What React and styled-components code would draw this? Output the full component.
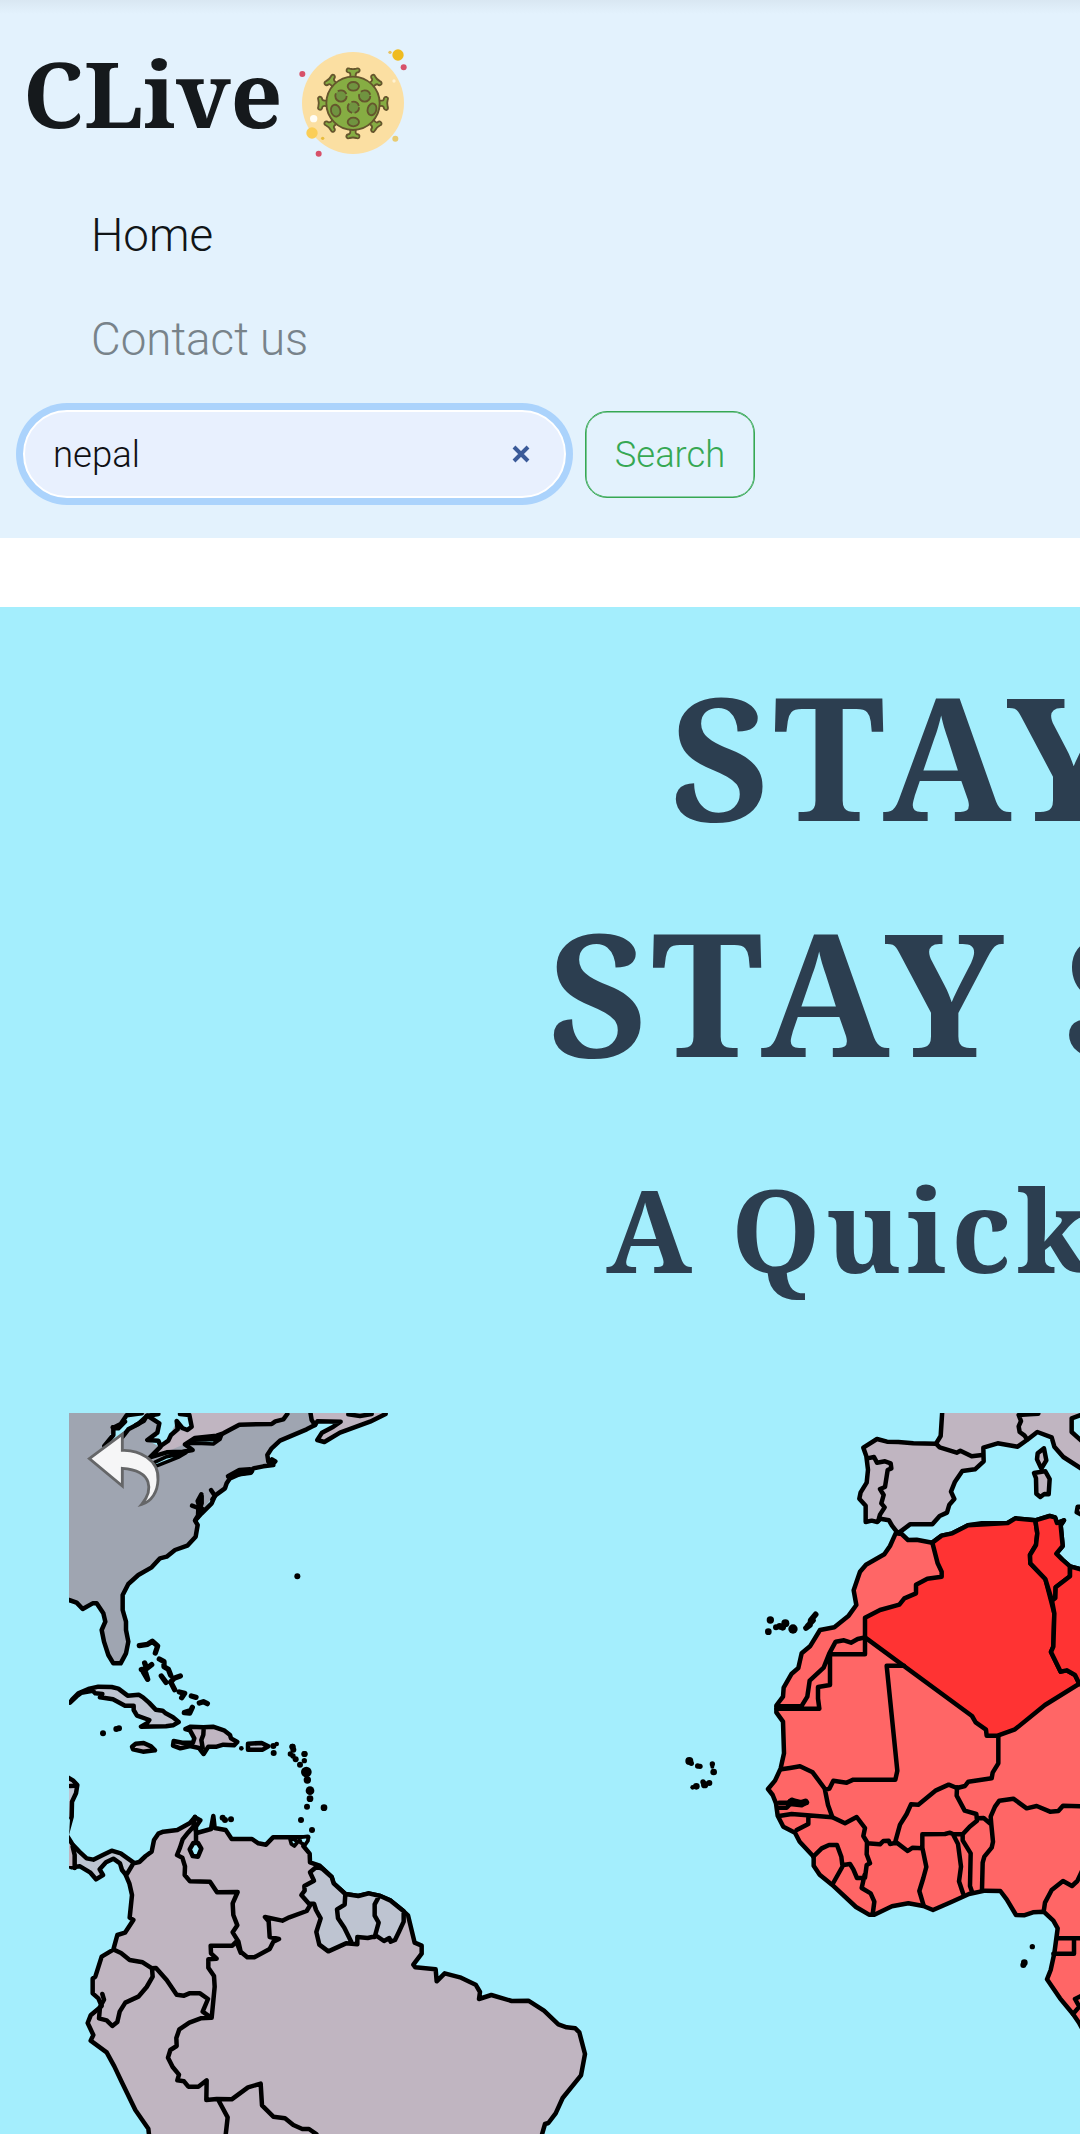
import React from "react";
import styled, { createGlobalStyle } from "styled-components";

const GlobalStyle = createGlobalStyle`
  *, *::before, *::after { box-sizing: border-box; }
  html, body { margin: 0; padding: 0; background: #fff; }
  body { overflow: hidden; font-family: Roboto, "Liberation Sans", sans-serif; font-weight: 300; }
`;

const serif = `"Noto Serif", "DejaVu Serif Condensed", "DejaVu Serif", serif`;

const Page = styled.div`
  width: 1080px;
  height: 2134px;
  overflow: hidden;
  display: flex;
  flex-direction: column;
`;

const Navbar = styled.header`
  height: 538px;
  flex: none;
  padding: 34px 17px 0;
  background: linear-gradient(#d9e7f2 0, #e3f2fd 14px);
`;

const Brand = styled.a`
  display: flex;
  height: 136px;
  padding-left: 6px;
  color: #15191c;
`;

const BrandName = styled.span`
  width: 269px;
  font: 700 91px/118px ${serif};
  white-space: nowrap;
`;

const Logo = styled.svg`
  width: 120px;
  height: 136px;
  flex: none;
`;

const NavList = styled.nav`
  display: flex;
  flex-direction: column;
  padding: 14px 0 0 74px;
`;

const NavLink = styled.a`
  height: 104px;
  line-height: 104px;
  font-size: 45.7px;
  color: ${(p) => (p.$active ? "#111517" : "#78838a")};
`;

const SearchForm = styled.div`
  display: flex;
  align-items: center;
  gap: 19px;
  height: 88px;
  margin-top: 18px;
  padding-left: 6px;
`;

const SearchField = styled.div`
  display: flex;
  align-items: center;
  justify-content: space-between;
  width: 543px;
  height: 88px;
  padding: 0 34px 0 28px;
  border: 2px solid #fff;
  border-radius: 44px;
  background: #e8f0fe;
  box-shadow: 0 0 0 7px #abd3fc;
  font-size: 36.5px;
  color: #101114;
`;

const ClearIcon = styled.svg`
  width: 18px;
  height: 18px;
`;

const SearchButton = styled.button`
  width: 170px;
  height: 87px;
  padding: 0;
  border: 1px solid #36a853;
  box-shadow: inset 0 0 0 0.6px #36a853;
  border-radius: 22px;
  background: transparent;
  color: #36a853;
  font: 300 36.3px Roboto, sans-serif;
`;

const Hero = styled.main`
  margin-top: 69px;
  height: 1527px;
  flex: none;
  background: #a4eefd;
  color: #2c3e50;
`;

const Headings = styled.div`
  height: 806px;
  padding-top: 30px;
`;

const Title = styled.h1`
  margin: 0;
  padding-left: ${(p) => p.$indent}px;
  font: 700 171px/236px ${serif};
  letter-spacing: 7.7px;
  white-space: nowrap;
`;

const Subtitle = styled.h2`
  margin: 40px 0 0;
  padding-left: 606px;
  font: 700 114px/160px ${serif};
  letter-spacing: 4.8px;
  white-space: nowrap;
`;

const MapFrame = styled.div`
  padding-left: 69px;
`;

const MapCanvas = styled.svg`
  display: block;
  width: 1011px;
  height: 721px;
`;

const Region = styled.path`
  fill: ${(p) => p.$fill || "none"};
  stroke: ${(p) => (p.$bare ? "none" : "#000")};
  stroke-width: ${(p) => p.$weight || 13.5};
  stroke-linejoin: round;
  stroke-linecap: round;
`;

const grey = "#9fa5b1";
const mauve = "#c0b5c1";
const steel = "#bec4d1";
const water = "#a4eefd";
const coral = "#ff6666";
const red = "#ff3333";

const Sheet = ({ x, y, children }) => (
  <g transform={`translate(${x} ${y}) scale(${1 / 3})`}>{children}</g>
);

const Dots = ({ points }) =>
  points.map(([x, y, r = 8]) => <circle key={`${x}-${y}`} cx={x} cy={y} r={r + 1} />);

const spikes = [0, 45, 90, 135, 180, 225, 270, 315];

const Virus = () => (
  <Logo viewBox="292 34 120 136" aria-label="CLive">
    <g transform="translate(280 30) scale(.33333)">
      <circle cx="219" cy="219" r="153" fill="#fbdfa2" />
      <circle cx="354" cy="75" r="17" fill="#efbb20" />
      <circle cx="330" cy="67" r="5" fill="#e7c262" />
      <circle cx="371" cy="112" r="9" fill="#d75169" />
      <circle cx="67" cy="132" r="9" fill="#d75169" />
      <circle cx="116" cy="371" r="9" fill="#d75169" />
      <circle cx="342" cy="153" r="5" fill="#fff2d2" />
      <circle cx="101" cy="266" r="11" fill="#fffdf5" />
      <circle cx="96" cy="309" r="17" fill="#fbce57" />
      <circle cx="128" cy="325" r="5" fill="#e9bd3d" />
      <circle cx="346" cy="326" r="9" fill="#e8cb72" />
      <g fill="#86ad43" stroke="#65562d" strokeWidth="5.5" strokeLinejoin="round">
        {spikes.map((a) => (
          <path
            key={a}
            transform={`rotate(${a} 219 220)`}
            d="M210 143 Q213 130 208 128 Q198 127 200 119 Q202 113 209 116 Q219 119 229 116 Q237 113 239 120 Q239 127 230 128 Q225 132 228 143"
          />
        ))}
        <circle cx="219" cy="220" r="80" />
        <g fill="#709340">
          <ellipse cx="220" cy="169" rx="17" ry="13" />
          <ellipse cx="220" cy="276" rx="17" ry="13" />
          <ellipse cx="167" cy="242" rx="14" ry="18" transform="rotate(-15 167 242)" />
          <ellipse cx="276" cy="238" rx="13" ry="18" transform="rotate(15 276 238)" />
          <circle cx="183" cy="198" r="17" strokeDasharray="60 8 30 9" />
          <circle cx="254" cy="198" r="17" strokeDasharray="58 8 34 7" />
          <circle cx="220" cy="232" r="17" strokeDasharray="22 8 34 8 28 7" />
        </g>
      </g>
    </g>
  </Logo>
);

const NorthAmerica = () => (
  <Sheet x={50} y={1400}>
    <Region $bare $fill={grey} d="M50 30H800L795 75L770 88L690 122L655 160L660 196L610 205L540 235L525 265L490 290L440 350L443 375L437 410L412 437L375 450L305 502L235 552L218 585V630L228 665L235 725L212 790H190L162 725L155 690L166 665L140 610L98 627L50 600Z" />
    <Region $bare $fill={mauve} d="M412 30H730L700 58L665 72H568L520 102L410 130L350 155L300 170L335 140L380 90L412 95L425 80Z" />
    <Region $bare $fill={water} d="M230 44L290 46L262 75L235 90L215 120L165 138L190 85ZM300 35L330 70L320 110L290 120L330 140L355 115L380 65L412 92L425 80L418 45L400 30Z" />
    <Region d="M218 110L235 88L265 72L292 47L328 70L322 98L292 120L325 122L332 140L300 172L350 157L398 155L428 150L405 133L435 114L500 107L520 100L568 74L665 72L676 64L700 58L712 42M332 138L355 122L363 105L383 88L380 63L397 84L412 90L425 80L418 45L390 42" />
    <Region d="M163 138L190 105V83L212 72L230 46L275 40M188 82L205 85L225 65M258 75L282 62L290 48L325 42" />
    <Region $fill={water} $weight={11} d="M418 130L435 120L495 118L516 102L510 118L490 132L455 130ZM312 188L350 170L408 158L384 172L322 197Z" />
    <Region $fill={mauve} d="M780 30L785 60L795 75L802 64L872 65L850 80L816 98L802 120L823 126L870 98L960 65L1007 42L1007 20Z" />
    <Region d="M895 43L930 48L965 42" />
    <Region d="M795 75L770 88L690 122L665 145L652 165L655 185L667 194L676 184L666 178M670 195L640 199L610 205L605 215L570 222L540 235L530 250L525 265L495 287L485 310L455 340L435 362L443 375L437 410L412 437L375 450L350 470L330 475L305 502L265 525L235 552L218 585V630L228 665V690L235 725L228 760L212 790H190L175 765L162 725L155 690L166 665L160 640L140 610H128L98 627L80 608L57 600" />
    <Region d="M534 229L568 210L600 208M550 225L603 218M483 270L495 288L487 298M454 283L443 303L448 320L462 330L442 350L436 360M426 317L445 324L444 350M455 287V310L448 330" />
    <Region $weight={16} d="M268 737L293 733L307 724L323 738L316 759M284 789L290 805L274 809L287 818L293 838L279 814L305 794M328 777L342 785V800L355 808L362 826M334 828L348 847M362 846L372 835L391 828M364 850L374 869M388 876L404 880L395 893M424 888L438 892M448 909L460 905L472 911M427 922L419 939L403 938L422 932" />
    <Region $fill={steel} d="M60 908L80 889L94 878L128 872L136 880L157 882L150 892L189 898L225 917H251V930L261 947L298 960L291 970L273 980L348 979L369 976L386 966L369 952L347 940L338 932L317 929L297 908L279 892L266 884L233 887L205 866L185 861L145 860L115 867L85 880L67 898Z" />
    <Region $fill={mauve} d="M246 1040L257 1031L281 1029L303 1039L315 1051L279 1055L249 1048Z" />
    <Region $fill={mauve} d="M406 987L422 980L460 982L489 980L522 991L540 1005L543 1015L562 1026L552 1036L520 1034L500 1040L475 1040L461 1062L447 1044L420 1038L391 1045L369 1037L371 1023L397 1028L429 1028L433 1015L420 991ZM461 986L460 1004L454 1020L458 1043" />
    <Region $fill={steel} d="M594 1031L635 1029L655 1039L638 1049H594Z" />
    <Dots points={[[742, 529], [159, 1000], [199, 987], [207, 985], [574, 1045, 6], [670, 1038], [680, 1032, 6], [671, 1059], [727, 1040], [730, 1049], [763, 1062]]} />
  </Sheet>
);

const SouthAmerica = () => (
  <Sheet x={50} y={1740}>
    <Region $fill={steel} d="M40 105L70 122L82 135L78 160L66 185L65 230L50 285L68 314L88 335L110 355L130 359L160 344L185 332L212 340L250 367L247 400L232 410L216 390L210 370L190 356L168 367L149 388L159 405L138 418L120 397L90 379L65 382L40 370Z" />
    <Region $bare $fill={mauve} d="M50 310L67 320L75 378H50Z" />
    <Region $bare $fill={water} d="M53 245L60 235L57 290Z" />
    <Region d="M68 320L74 345V384M60 138L76 137" />
    <Region $fill={mauve} d="M228 407L250 370L268 366L287 348L305 335L312 300L325 281L340 275L382 270L420 249L434 232L451 241L435 264L440 279L483 267L490 228L494 264L527 270L545 297H606L625 310L648 314L669 292H775L760 318L779 341L780 367L809 377L845 411L851 430L886 462L925 468L956 460L991 468L1022 482L1061 514L1074 526L1094 608L1115 617V641L1090 674L1096 682L1157 688L1160 724L1184 700L1230 712L1277 734L1290 756L1287 777L1324 765L1385 783L1435 782L1482 812L1525 853L1550 862L1576 865L1588 877L1605 942L1593 1006L1538 1074L1517 1120L1495 1149L1485 1152L1474 1190L1450 1210H300L295 1166L256 1110L217 1030L193 979L170 937L122 902L130 885L113 849L122 826L155 798L145 775L128 760V716L136 710L155 650L190 629L202 585L225 578L250 540L239 533L246 465L238 430Z" />
    <Region $fill={steel} d="M800 380L780 397L792 422L763 438L764 452L754 465L777 491H792L798 510L812 535L799 576L808 614L835 634L888 610L922 613V591L953 594L980 588L1002 603L1018 594L1022 605L1035 600L1047 575L1061 545L1061 514L1022 482L991 468L956 460L925 468L886 462L851 430L845 411L818 387ZM886 462L884 494L861 508L864 535L883 563L904 606M985 473L974 493V527L986 548L974 591" />
    <Region $fill={water} d="M430 309H444L454 326L444 350L428 348L419 328Z" />
    <Region d="M435 230L430 260L414 278L398 298L390 323L381 345L397 353L405 379L404 405L420 424L480 425L501 457L563 456L548 490L550 525L562 556L548 577L565 604L572 635L592 652H613L659 627L670 605L687 597L659 591L656 544L645 531L697 542L718 532L770 513L782 493M438 263V308M192 629L213 639L239 660L278 667L306 685L318 684L350 720L380 764L402 767L418 760H450L474 777L458 815L483 833M485 833L494 740L492 708L475 683V658L500 656L483 640L482 617H547L559 605L572 638M306 685L308 710L290 741L265 770L226 788L209 815L202 846L187 858L170 841L147 835L150 801L162 779L157 762M483 833L452 835L418 848L388 868L379 894L380 918L361 930L354 953L368 981L387 1004L382 1021L402 1024L415 1040H445L470 1021L469 1080L500 1077L545 1078L594 1042L632 1031L636 1096L670 1130L705 1135L730 1155L757 1167H777L799 1182M505 1080L533 1132L527 1185" />
    <Region $fill={water} $weight={11} d="M720 298L731 297L743 306L733 318L724 312ZM748 292L752 308L765 315L774 302V289Z" />
    <Dots points={[[518, 233], [525, 240], [543, 238], [728, 20], [721, 42, 7], [729, 48, 7], [737, 58], [764, 42], [763, 62, 7], [750, 74], [769, 96, 15], [772, 120, 10], [780, 152, 12], [780, 176, 9], [771, 200], [822, 203, 9], [753, 240], [786, 270]]} />
  </Sheet>
);

const Europe = () => (
  <Sheet x={740} y={1400}>
    <Region $fill={mauve} d="M607 30L602 108L588 131L520 130L475 126L441 125L411 117L370 143L379 169L384 209L380 248L362 277L358 296L377 317V366L395 362L412 366L421 356L447 361L456 377L474 400L510 373H577L599 348L621 338L628 314L643 297L633 275L645 245L667 213L705 208L731 184L730 143L773 130L833 140L861 120L892 96L935 112L943 140L970 171L1035 213V30Z" />
    <Region d="M588 131L599 142L650 158L661 152L695 169L727 165M382 175L402 171L411 188L435 184L452 190L454 205L443 210L435 261L420 267L431 285L424 310L434 322L420 344L415 362M861 118L853 106L839 96L836 79L843 63L836 45L868 43L895 41" />
    <Region $fill={water} d="M1030 42L995 55V96L1030 127" />
    <Region $fill={mauve} d="M912 145L893 160L891 178L904 206L919 181ZM882 219L905 215L916 214L929 237L926 283L913 282L901 291L889 281L888 235Z" />
    <Region $fill={mauve} d="M1030 320H1013L1010 337L1030 347" />
    <Dots points={[[91, 660, 10], [85, 695, 9], [108, 682, 8], [119, 679, 9], [128, 682, 9], [136, 670, 11], [159, 687, 13]]} />
    <Region $weight={17} d="M198 684L210 675L212 661L227 643M203 678L219 661" />
  </Sheet>
);

const Africa = () => (
  <Sheet x={740} y={1400}>
    <Region $fill={coral} d="M467 400L485 402L504 420L530 419L577 428L605 407L637 400L684 376L725 370L803 369L826 355L886 361L929 348L945 352L951 369L972 361L962 376L968 438L949 461L967 479L990 499L1040 513V1910L1018 1870L999 1842L960 1795L921 1738L932 1710L943 1660L953 1585L940 1562L911 1535L879 1537L852 1546L828 1545L800 1498L781 1473L735 1472L687 1482L634 1506L579 1530L550 1518L505 1510L456 1519L403 1544H387L348 1521L276 1454L239 1424L221 1397V1370L179 1325L165 1298L130 1280L113 1247L108 1210L98 1185L84 1167L105 1142L122 1105L132 1060L129 965L109 937L110 915L129 890L131 863L155 821L175 804L185 760L210 739L240 690L283 682L326 647L349 615L341 571L360 515L378 494L433 463L450 438Z" />
    <Region $fill={red} d="M577 428L605 407L637 400L684 376L803 369L826 355L886 361L892 400L888 435L870 465L871 490L916 537L943 640L940 740L933 756L962 815L980 811L1005 825L1018 851L915 915L825 988L773 1007H740L738 989L707 967L696 948L375 712V653L420 630L478 614L493 595L528 580V554L562 536L605 530V515L593 490Z" />
    <Region $fill={red} d="M886 361L929 348L945 352L951 369L972 361L962 376L968 438L949 461L967 479L990 499V529L947 562L946 594L936 602L916 537L871 490L870 465L888 435L892 400Z" />
    <Region $fill={red} d="M990 499L1040 513V866L1018 851L1005 825L980 811L962 815L933 756L940 740L943 640L936 602L946 594L947 562L990 529Z" />
    <Region d="M109 919H184L202 890L209 842L251 803L268 760L287 725L312 721L333 728L353 717L375 712V763H270V855L234 861V896L238 926H109M492 797H440L472 1112L466 1139H340L320 1148L280 1142L268 1166L255 1170L264 1215L277 1251M775 1008V1090L758 1118L755 1135L685 1145L675 1158L651 1164L626 1154L588 1171L535 1214L513 1213L500 1242L480 1274L466 1325" />
    <Region d="M124 1108L150 1104L180 1099L218 1117L255 1167M117 1208H145L155 1199L180 1209H200M117 1223H140L151 1212L185 1216L201 1207M117 1248L155 1242L230 1248L277 1252L315 1270L350 1251L375 1284L370 1308L381 1326L380 1363L390 1390L380 1395L375 1433L351 1434L340 1408L330 1392L310 1395L278 1452M205 1248V1272L170 1290M220 1370L245 1345L267 1335H291L304 1370L307 1395M381 1330L420 1333L430 1323L446 1322L450 1332L470 1328L503 1353L518 1343L547 1345V1303L615 1302L630 1298L640 1303H668L689 1280L711 1262L709 1242L674 1232L650 1187L651 1162M547 1343L559 1401L550 1434L538 1473L551 1517M374 1424L365 1464L392 1480L403 1505L398 1543M639 1303L654 1332L663 1400L657 1444L669 1480M668 1303V1321L692 1360L690 1458L697 1478M711 1255L731 1254L754 1274L752 1250L765 1220L778 1202L820 1196L860 1225L890 1218L930 1235L955 1233L969 1217L1035 1219M754 1274L759 1325L755 1343L733 1370L728 1388L726 1470M911 1535L915 1508L935 1470L969 1443L996 1458L1012 1443L1025 1415M953 1615H1035M1002 1616V1661H940M999 1842L1018 1820L1005 1797L1030 1785" />
    <Region $weight={20} d="M152 1206L166 1206L182 1210L196 1206" />
    <Dots points={[[877, 1640, 7], [853, 1688, 9], [850, 1695, 8]]} />
  </Sheet>
);

const CapeVerde = () => (
  <Sheet x={670} y={1740}>
    <Dots points={[[58, 63, 11], [64, 70, 7], [83, 78, 7], [90, 79, 7], [127, 72, 7], [127, 80, 5], [131, 96, 9], [68, 142, 6], [79, 139, 9], [99, 126, 7], [104, 134, 10], [118, 129, 8]]} />
  </Sheet>
);

const BackArrow = () => (
  <Sheet x={50} y={1400}>
    <path
      d="M118 176L217 102V151C265 149 328 178 324 240C323 275 305 304 275 313C309 272 311 212 217 205V258Z"
      fill="#f6f6f7"
      stroke="#656668"
      strokeWidth="8.5"
      strokeLinejoin="miter"
    />
  </Sheet>
);

export default function App() {
  return (
    <Page>
      <GlobalStyle />
      <Navbar>
        <Brand>
          <BrandName>CLive</BrandName>
          <Virus />
        </Brand>
        <NavList>
          <NavLink $active>Home</NavLink>
          <NavLink>Contact us</NavLink>
        </NavList>
        <SearchForm>
          <SearchField>
            <span>nepal</span>
            <ClearIcon viewBox="0 0 18 18">
              <path d="M2 2L16 16M16 2L2 16" stroke="#3a5a99" strokeWidth="4" />
            </ClearIcon>
          </SearchField>
          <SearchButton>Search</SearchButton>
        </SearchForm>
      </Navbar>
      <Hero>
        <Headings>
          <Title $indent={670}>STAY</Title>
          <Title $indent={548}>STAY S</Title>
          <Subtitle>A Quick</Subtitle>
        </Headings>
        <MapFrame>
          <MapCanvas viewBox="69 1413 1011 721">
            <NorthAmerica />
            <SouthAmerica />
            <Europe />
            <Africa />
            <CapeVerde />
            <BackArrow />
          </MapCanvas>
        </MapFrame>
      </Hero>
    </Page>
  );
}
